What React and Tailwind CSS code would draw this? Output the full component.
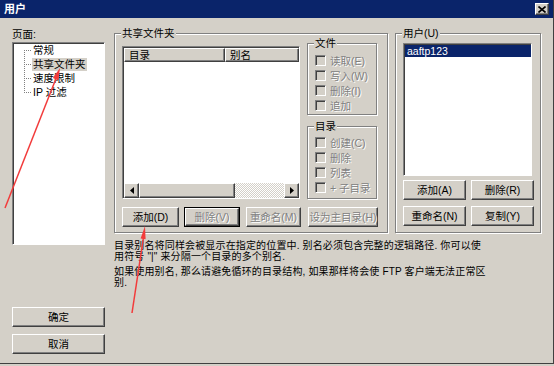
import React from "react";

const font = "font-['Liberation_Sans','Noto_Sans_CJK_SC',sans-serif]";
const raised =
  "border border-t-white border-l-white border-r-[#404040] border-b-[#404040] shadow-[inset_-1px_-1px_0_#808080]";
const sunken =
  "border border-t-[#808080] border-l-[#808080] border-r-white border-b-white shadow-[inset_1px_1px_0_#404040]";
const grey = "text-[#808080] [text-shadow:1px_1px_0_#ffffff]";

const Button = ({ label, className = "", disabled = false, focused = false }) => (
  <div className={`h-[20px] flex ${focused ? "border border-black" : ""} ${className}`}>
    <div
      className={`flex-1 flex items-center justify-center leading-[12px] ${raised} ${
        disabled ? grey : "text-black"
      }`}
    >
      {label}
    </div>
  </div>
);

const GroupBox = ({ title, className = "", children }) => (
  <div
    className={`relative border border-[#808080] shadow-[inset_1px_1px_0_#ffffff,1px_1px_0_#ffffff] ${className}`}
  >
    <span className="absolute left-[6px] -top-[7px] px-[1px] bg-[#d4d0c8] leading-[12px]">
      {title}
    </span>
    {children}
  </div>
);

const Check = ({ label }) => (
  <div className="h-[15px] flex items-center">
    <span className={`w-[11px] h-[11px] bg-[#d4d0c8] ${sunken}`} />
    <span className={`ml-[4px] leading-[12px] ${grey}`}>{label}</span>
  </div>
);

const Arrow = ({ left }) => (
  <div className={`w-[15px] flex items-center justify-center bg-[#d4d0c8] ${raised}`}>
    <svg width="4" height="7" viewBox="0 0 4 7">
      {left ? <path d="M4 0 L0 3.5 L4 7 Z" fill="#000" /> : <path d="M0 0 L4 3.5 L0 7 Z" fill="#000" />}
    </svg>
  </div>
);

const treeItems = ["常规", "共享文件夹", "速度限制", "IP 过滤"];

export default function App() {
  return (
    <div className={`relative w-[554px] h-[366px] bg-[#d4d0c8] text-black text-[10.5px] overflow-hidden ${font}`}>
      <div className="h-[364px] flex flex-col border-r border-b border-[#404040]">
        {/* title bar */}
        <div className="h-[18px] bg-[#0a246a] flex items-center pl-[4px] pr-[4px]">
          <span className="text-white font-bold text-[11px] leading-[12px]">用户</span>
          <div className={`ml-auto w-[14px] h-[12px] bg-[#d4d0c8] flex items-center justify-center ${raised}`}>
            <svg width="8" height="7" viewBox="0 0 8 7">
              <path d="M0.5 0.5 L7.5 6.5 M7.5 0.5 L0.5 6.5" stroke="#000" strokeWidth="1.6" />
            </svg>
          </div>
        </div>

        <div className="flex pl-[12px] pt-[10px]">
          {/* left column */}
          <div className="w-[93px] flex flex-col">
            <div className="h-[14px] leading-[12px]">页面:</div>
            <div className={`relative h-[203px] bg-white ${sunken}`}>
              <svg className="absolute left-0 top-0" width="30" height="60">
                <path
                  d="M11.5 7 V49 M11 7.5 H18 M11 21.5 H18 M11 35.5 H18 M11 49.5 H18"
                  stroke="#808080"
                  strokeDasharray="1 1"
                  fill="none"
                />
              </svg>
              <div className="flex flex-col pl-[19px]">
                {treeItems.map((item, i) => (
                  <div key={item} className="h-[14px] flex items-center">
                    <span className={`px-[1px] leading-[13px] ${i === 1 ? "bg-[#d4d0c8]" : ""}`}>{item}</span>
                  </div>
                ))}
              </div>
            </div>
            <Button label="确定" className="mt-[62px]" />
            <Button label="取消" className="mt-[7px]" />
          </div>

          {/* right part */}
          <div className="ml-[9px] flex flex-col">
            <div className="flex mt-[5px]">
              <GroupBox title="共享文件夹" className="w-[274px] h-[200px] pt-[9px] pl-[7px]">
                <div className="flex">
                  <div className={`mt-[3px] w-[178px] h-[153px] bg-white flex flex-col pt-[1px] pl-[1px] ${sunken}`}>
                    <div className="h-[14px] flex">
                      <div className={`w-[101px] pl-[4px] leading-[12px] bg-[#d4d0c8] ${raised}`}>目录</div>
                      <div className={`flex-1 pl-[4px] leading-[12px] bg-[#d4d0c8] ${raised}`}>别名</div>
                    </div>
                    <div className="flex-1" />
                    <div className="h-[15px] flex">
                      <Arrow left />
                      <div className={`w-[96px] bg-[#d4d0c8] ${raised}`} />
                      <div className="flex-1 bg-[repeating-conic-gradient(#d4d0c8_0%_25%,#ffffff_0%_50%)] bg-size-[2px_2px]" />
                      <Arrow />
                    </div>
                  </div>
                  <div className="ml-[7px] w-[70px] flex flex-col">
                    <GroupBox title="文件" className="h-[72px] pt-[9px] pl-[7px]">
                      <Check label="读取(E)" />
                      <Check label="写入(W)" />
                      <Check label="删除(I)" />
                      <Check label="追加" />
                    </GroupBox>
                    <GroupBox title="目录" className="mt-[11px] h-[73px] pt-[8px] pl-[7px]">
                      <Check label="创建(C)" />
                      <Check label="删除" />
                      <Check label="列表" />
                      <Check label="+ 子目录" />
                    </GroupBox>
                  </div>
                </div>
                <div className="flex mt-[8px]">
                  <Button label="添加(D)" className="w-[57px]" />
                  <Button label="删除(V)" className="w-[56px] ml-[5px]" disabled focused />
                  <Button label="重命名(M)" className="w-[55px] ml-[6px]" disabled />
                  <Button label="设为主目录(H)" className="w-[70px] ml-[7px]" disabled />
                </div>
              </GroupBox>

              <GroupBox title="用户(U)" className="ml-[7px] w-[146px] h-[200px] pt-[9px] pl-[7px]">
                <div className={`w-[129px] h-[133px] bg-white pt-[1px] pl-[1px] ${sunken}`}>
                  <div className="h-[12px] bg-[#0a246a] text-white pl-[2px] leading-[12px]">aaftp123</div>
                </div>
                <div className="flex gap-[5px] mt-[4px]">
                  <Button label="添加(A)" className="w-[63px]" />
                  <Button label="删除(R)" className="w-[63px]" />
                </div>
                <div className="flex gap-[5px] mt-[6px]">
                  <Button label="重命名(N)" className="w-[63px]" />
                  <Button label="复制(Y)" className="w-[63px]" />
                </div>
              </GroupBox>
            </div>

            <div className="mt-[7px] text-[10px] tracking-[0.15px] leading-[11px] whitespace-nowrap">
              <div>目录别名将同样会被显示在指定的位置中. 别名必须包含完整的逻辑路径. 你可以使</div>
              <div>用符号 "|" 来分隔一个目录的多个别名.</div>
              <div className="mt-[4px]">如果使用别名, 那么请避免循环的目录结构, 如果那样将会使 FTP 客户端无法正常区</div>
              <div>别.</div>
            </div>
          </div>
        </div>
      </div>

      {/* red annotation arrows */}
      <svg className="absolute inset-0 pointer-events-none" width="554" height="366">
        <path d="M5 208 L57 76" stroke="#f23b3b" strokeWidth="1.5" fill="none" />
        <path d="M60 68 L58.4 80.3 L52.8 78.1 Z" fill="#f23b3b" />
        <path d="M132 313 L144 234" stroke="#f23b3b" strokeWidth="1.5" fill="none" />
        <path d="M145 226 L145.6 239.3 L140.6 238.5 Z" fill="#f23b3b" />
      </svg>
    </div>
  );
}
